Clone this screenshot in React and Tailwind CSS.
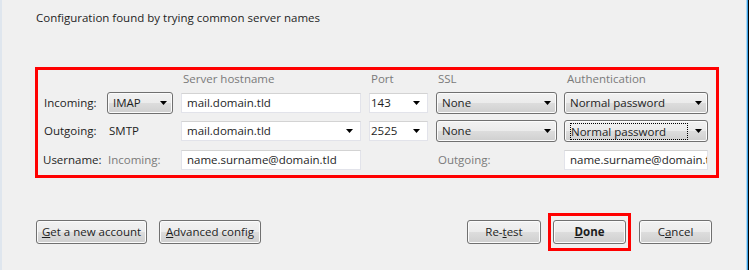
import React from "react";

const btnBg =
  "bg-[linear-gradient(#f2f2f2_0%,#ebebeb_50%,#dddddd_50%,#cfcfcf_100%)] border border-[#707070] rounded-[3px] shadow-[inset_0_0_0_1px_#fbfbfb]";

function Arrow() {
  return (
    <svg width="7" height="4" viewBox="0 0 7 4" className="shrink-0">
      <path d="M0 0h7L3.5 4z" fill="#000" />
    </svg>
  );
}

function Select({ value, w, focus }) {
  return (
    <div className={`${btnBg} ${w} h-[22px] flex items-center pl-[5px] pr-[5px] justify-between`}>
      {focus ? (
        <span className="border border-dotted border-[#000] leading-[15px] w-[118px]">{value}</span>
      ) : (
        <span className="leading-[16px]">{value}</span>
      )}
      <Arrow />
    </div>
  );
}

function TextBox({ value, w, arrow, pl = "pl-[5px]" }) {
  return (
    <div
      className={`${w} h-[20px] bg-white border border-[#e2e3ea] border-t-[#d3d3d3] flex items-center justify-between ${pl} pr-[7px] overflow-hidden`}
    >
      <span className="leading-[16px] whitespace-nowrap">{value}</span>
      {arrow && <Arrow />}
    </div>
  );
}

function Button({ children, w, bold }) {
  return (
    <div className={`${btnBg} ${w} h-[24px] flex items-center justify-center ${bold ? "font-bold" : ""}`}>
      <span className="leading-[16px]">{children}</span>
    </div>
  );
}

export default function App() {
  return (
    <div className="w-[749px] h-[270px] bg-[#f0f0f0] flex text-[11.5px] text-[#1e1e1e] font-['Segoe_UI','Open_Sans',sans-serif] overflow-hidden">
      <div className="w-[2px] bg-[#dfe6ee]" />

      <div className="w-[744px] pl-[33px] flex flex-col">
        {/* TITLE */}
        <div className="pt-[10px] pl-[1px] leading-[16px]">
          Configuration found by trying common server names
        </div>

        {/* SETTINGS BOX */}
        <div className="mt-[41px] w-[684px] h-[111px] border-[3px] border-[#ff0000] pl-[6px] pt-[1px]">
          <div className="flex h-[16px] leading-[16px] text-[#7a7a7a]">
            <div className="w-[137px]" />
            <div className="w-[188px] pl-[2px]">Server hostname</div>
            <div className="w-[67px] pl-[2px]">Port</div>
            <div className="w-[128px] pl-[2px]">SSL</div>
            <div className="pl-[3px]">Authentication</div>
          </div>

          {/* INCOMING */}
          <div className="flex items-center mt-[5px] h-[22px]">
            <div className="w-[63px]">Incoming:</div>
            <Select value="IMAP" w="w-[66px]" />
            <div className="ml-[8px]">
              <TextBox value="mail.domain.tld" w="w-[180px]" />
            </div>
            <div className="ml-[8px]">
              <TextBox value="143" w="w-[59px]" arrow pl="pl-[1px]" />
            </div>
            <div className="ml-[8px]">
              <Select value="None" w="w-[121px]" />
            </div>
            <div className="ml-[7px]">
              <Select value="Normal password" w="w-[144px]" />
            </div>
          </div>

          {/* OUTGOING */}
          <div className="flex items-center mt-[6px] h-[22px]">
            <div className="w-[65px]">Outgoing:</div>
            <div className="w-[72px]">SMTP</div>
            <TextBox value="mail.domain.tld" w="w-[180px]" arrow />
            <div className="ml-[8px]">
              <TextBox value="2525" w="w-[59px]" arrow pl="pl-[1px]" />
            </div>
            <div className="ml-[8px]">
              <Select value="None" w="w-[121px]" />
            </div>
            <div className="ml-[7px]">
              <Select value="Normal password" w="w-[144px]" focus />
            </div>
          </div>

          {/* USERNAME */}
          <div className="flex items-center mt-[7px] h-[21px]">
            <div className="w-[65px] -ml-[1px]">Username:</div>
            <div className="w-[73px] text-[#7a7a7a]">Incoming:</div>
            <TextBox value="name.surname@domain.tld" w="w-[180px]" />
            <div className="w-[203px] pl-[77px] text-[#7a7a7a]">Outgoing:</div>
            <TextBox value="name.surname@domain.tld" w="w-[144px]" />
          </div>
        </div>

        {/* BUTTONS */}
        <div className="flex items-center mt-[35px] pl-[1px]">
          <Button w="w-[111px]">
            <u>G</u>et a new account
          </Button>
          <div className="ml-[12px]">
            <Button w="w-[102px]">
              <u>A</u>dvanced config
            </Button>
          </div>
          <div className="ml-[206px]">
            <Button w="w-[74px]">
              Re-<u>t</u>est
            </Button>
          </div>
          <div className="ml-[7px] border-[3px] border-[#ff0000] px-[2px] py-[4px]">
            <Button w="w-[73px]" bold>
              <u>D</u>one
            </Button>
          </div>
          <div className="ml-[8px]">
            <Button w="w-[73px]">
              C<u>a</u>ncel
            </Button>
          </div>
        </div>
      </div>

      <div className="w-[1px] bg-[#a6d6f4]" />
      <div className="w-[1px] bg-[#3c9fe3]" />
      <div className="w-[1px] bg-[#000000]" />
    </div>
  );
}
